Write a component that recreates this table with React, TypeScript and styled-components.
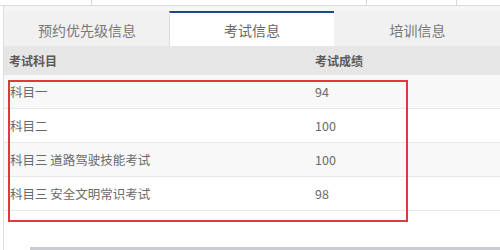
import React from "react";
import styled, { createGlobalStyle } from "styled-components";

const Global = createGlobalStyle`
  html, body { margin: 0; padding: 0; background: #fff; }
  body { font-family: "Noto Sans CJK SC", "Noto Sans", sans-serif; width: 500px; height: 250px; overflow: hidden; }
`;

const Page = styled.div`
  width: 500px;
  height: 250px;
  display: flex;
  flex-direction: column;
  background: #fff;
`;

const TopStrip = styled.div`
  height: 5px;
  display: grid;
  grid-template-columns: 92px 275px 90px 1fr;
  border-bottom: 1px solid #dcdcdc;
`;

const StripCell = styled.div`
  border-right: 1px solid #d8d8d8;
  &:last-child { border-right: none; }
`;

const Frame = styled.div`
  flex: 1;
  margin-left: 3px;
  border-left: 1px solid #dedede;
  display: flex;
  flex-direction: column;
  background: #f6f6f6;
  padding-top: 5px;
`;

const Tabs = styled.div`
  display: grid;
  grid-template-columns: 165px 165px 1fr;
  height: 35px;
`;

const Tab = styled.div<{ $active?: boolean }>`
  display: flex;
  align-items: center;
  justify-content: center;
  font-size: 14px;
  color: ${(p) => (p.$active ? "#666" : "#777")};
  background: ${(p) => (p.$active ? "#fff" : "#f1f1f1")};
  border-top: 2px solid ${(p) => (p.$active ? "#1d4a86" : "transparent")};
  border-left: 1px solid ${(p) => (p.$active ? "#dcdcdc" : "transparent")};
  box-sizing: border-box;
`;

const Body = styled.div`
  flex: 1;
  background: #fff;
  display: flex;
  flex-direction: column;
  position: relative;
`;

const HeaderRow = styled.div`
  display: grid;
  grid-template-columns: 306px 1fr;
  height: 29px;
  align-items: center;
  background: #e6e6e6;
  padding-left: 5px;
  font-size: 12px;
  font-weight: bold;
  color: #5a5a5a;
`;

const Row = styled.div<{ $odd?: boolean }>`
  display: grid;
  grid-template-columns: 305px 1fr;
  height: 34px;
  align-items: center;
  padding-left: 6px;
  font-size: 12.5px;
  color: #6a6a6a;
  background: ${(p) => (p.$odd ? "#f8f8f8" : "#fff")};
  border-bottom: 1px solid #e8e8e8;
  box-sizing: border-box;
`;

const Highlight = styled.div`
  position: absolute;
  left: 4px;
  top: 34px;
  width: 400px;
  height: 142px;
  border: 2px solid #e0383e;
  box-sizing: border-box;
  pointer-events: none;
`;

const Spacer = styled.div`
  flex: 1;
`;

const BottomBar = styled.div`
  height: 3px;
  margin-left: 26px;
  background: #c9ccd3;
`;

const rows = [
  ["科目一", "94"],
  ["科目二", "100"],
  ["科目三 道路驾驶技能考试", "100"],
  ["科目三 安全文明常识考试", "98"],
];

export default function App() {
  return (
    <Page>
      <Global />
      <TopStrip>
        <StripCell />
        <StripCell />
        <StripCell />
        <StripCell />
      </TopStrip>
      <Frame>
        <Tabs>
          <Tab>预约优先级信息</Tab>
          <Tab $active>考试信息</Tab>
          <Tab>培训信息</Tab>
        </Tabs>
        <Body>
          <HeaderRow>
            <span>考试科目</span>
            <span>考试成绩</span>
          </HeaderRow>
          {rows.map((r, i) => (
            <Row key={i} $odd={i % 2 === 0}>
              <span>{r[0]}</span>
              <span>{r[1]}</span>
            </Row>
          ))}
          <Spacer />
          <BottomBar />
          <Highlight />
        </Body>
      </Frame>
    </Page>
  );
}
